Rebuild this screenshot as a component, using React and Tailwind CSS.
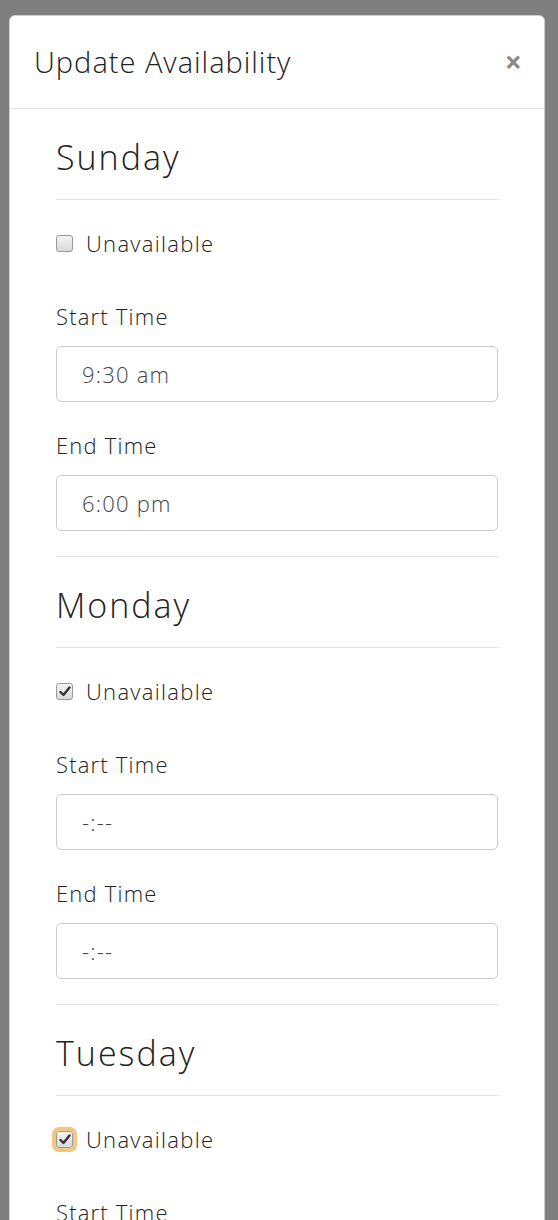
import React from 'react';

const days = [
  { name: 'Sunday', unavailable: false, start: '9:30 am', end: '6:00 pm' },
  { name: 'Monday', unavailable: true, start: '-:--', end: '-:--' },
  { name: 'Tuesday', unavailable: true, start: '-:--', end: '-:--', focused: true },
];

const Checkbox = ({ checked, focused }) => (
  <span
    className={
      'flex items-center justify-center w-[17px] h-[17px] rounded-[3px] border border-[#9a9a9a] bg-gradient-to-b from-[#f4f4f4] to-[#d8d8d8] ' +
      (focused ? 'ring-[4px] ring-[#f0b95e]/80' : '')
    }
  >
    {checked && (
      <svg width="12" height="11" viewBox="0 0 12 11">
        <path d="M1.5 6 L4.5 9 L10.5 1.5" fill="none" stroke="#333" strokeWidth="2.4" strokeLinecap="round" strokeLinejoin="round" />
      </svg>
    )}
  </span>
);

const Day = ({ day }) => (
  <section className="border-b border-[#e5e5e5] pb-[25px]">
    <h2 className="pt-[28px] pb-[22px] text-[34px] leading-[40px] tracking-[2px] text-[#222] border-b border-[#e5e5e5]">
      {day.name}
    </h2>
    <label className="mt-[28px] flex items-center h-[30px] text-[22px] tracking-[1.3px] text-[#222]">
      <Checkbox checked={day.unavailable} focused={day.focused} />
      <span className="ml-[13px]">Unavailable</span>
    </label>
    <div className="mt-[43px] text-[22px] leading-[30px] tracking-[1.2px] text-[#222]">Start Time</div>
    <div className="mt-[15px] h-[56px] rounded-[5px] border border-[#ccc] pl-[25px] flex items-center text-[22px] tracking-[1.2px] text-[#444]">
      {day.start}
    </div>
    <div className="mt-[28px] text-[22px] leading-[30px] tracking-[1.2px] text-[#222]">End Time</div>
    <div className="mt-[15px] h-[56px] rounded-[5px] border border-[#ccc] pl-[25px] flex items-center text-[22px] tracking-[1.2px] text-[#444]">
      {day.end}
    </div>
  </section>
);

const App = () => {
  return (
    <div className="h-[1220px] overflow-hidden bg-[#7f7f7f] pt-[15px] pl-[9px] pr-[13px] font-['Open_Sans',sans-serif] font-light">
      <div className="bg-white rounded-[6px] border border-black/20 h-[1300px]">
        {/* header */}
        <div className="h-[93px] border-b border-[#e5e5e5] flex items-center justify-between pl-[24px] pr-[22px]">
          <h1 className="text-[29px] tracking-[1px] text-[#222]">Update Availability</h1>
          <span className="text-[30px] font-bold text-[#8a8a8a] leading-none">×</span>
        </div>
        {/* body */}
        <div className="pl-[46px] pr-[46px]">
          {days.map((d) => (
            <Day key={d.name} day={d} />
          ))}
        </div>
      </div>
    </div>
  );
};

export default App;
